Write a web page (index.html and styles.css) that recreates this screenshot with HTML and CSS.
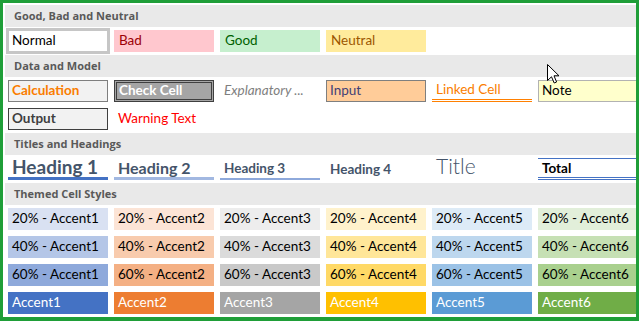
FILE: index.html
```html
<!DOCTYPE html>
<html lang="en">
  <head>
    <meta charset="UTF-8" />
    <title>Cell Styles</title>
    <link rel="stylesheet" href="styles.css">
  </head>
  <body>
    <div class="frame">
      <div class="gallery">
        <div class="band">Good, Bad and Neutral</div>
        <div class="row">
          <div class="cell normal">Normal</div>
          <div class="cell bad">Bad</div>
          <div class="cell good">Good</div>
          <div class="cell neutral">Neutral</div>
        </div>

        <div class="band">Data and Model</div>
        <div class="row">
          <div class="cell calculation">Calculation</div>
          <div class="cell check">Check Cell</div>
          <div class="cell explanatory">Explanatory ...</div>
          <div class="cell input">Input</div>
          <div class="cell linked">Linked Cell</div>
          <div class="cell note">Note</div>
        </div>
        <div class="row">
          <div class="cell output">Output</div>
          <div class="cell warning">Warning Text</div>
        </div>

        <div class="band">Titles and Headings</div>
        <div class="row">
          <div class="cell heading1">Heading 1</div>
          <div class="cell heading2">Heading 2</div>
          <div class="cell heading3">Heading 3</div>
          <div class="cell heading4">Heading 4</div>
          <div class="cell title">Title</div>
          <div class="cell total">Total</div>
        </div>

        <div class="band">Themed Cell Styles</div>
        <div class="row">
          <div class="cell a1-20">20% - Accent1</div>
          <div class="cell a2-20">20% - Accent2</div>
          <div class="cell a3-20">20% - Accent3</div>
          <div class="cell a4-20">20% - Accent4</div>
          <div class="cell a5-20">20% - Accent5</div>
          <div class="cell a6-20">20% - Accent6</div>
        </div>
        <div class="row">
          <div class="cell a1-40">40% - Accent1</div>
          <div class="cell a2-40">40% - Accent2</div>
          <div class="cell a3-40">40% - Accent3</div>
          <div class="cell a4-40">40% - Accent4</div>
          <div class="cell a5-40">40% - Accent5</div>
          <div class="cell a6-40">40% - Accent6</div>
        </div>
        <div class="row">
          <div class="cell a1-60">60% - Accent1</div>
          <div class="cell a2-60">60% - Accent2</div>
          <div class="cell a3-60">60% - Accent3</div>
          <div class="cell a4-60">60% - Accent4</div>
          <div class="cell a5-60">60% - Accent5</div>
          <div class="cell a6-60">60% - Accent6</div>
        </div>
        <div class="row">
          <div class="cell accent a1">Accent1</div>
          <div class="cell accent a2">Accent2</div>
          <div class="cell accent a3">Accent3</div>
          <div class="cell accent a4">Accent4</div>
          <div class="cell accent a5">Accent5</div>
          <div class="cell accent a6">Accent6</div>
        </div>
      </div>
    </div>

    <!-- mouse pointer sitting over the gallery -->
    <svg class="pointer" width="13" height="20" viewBox="0 0 13 20">
      <path d="M0.5 0.5 L0.5 16.5 L4.5 12.8 L7.2 19 L9.6 18 L7 11.8 L12 11.8 Z"
            fill="#fff" stroke="#000" stroke-width="1" stroke-linejoin="miter" />
    </svg>
  </body>
</html>
```

FILE: styles.css
```css
body {
  margin: 0;
  padding: 0;
  background: #fff;
  font-family: Lato, "Liberation Sans", sans-serif;
}
.frame {
  position: relative;
  width: 639px;
  height: 321px;
  box-sizing: border-box;
  border: 3px solid #1f9e38;
  border-bottom-width: 4px;
  overflow: hidden;
  background: #fff;
}
.gallery {
  padding: 2px 0 0 2px;
  width: 700px;
}
.band {
  height: 22px;
  line-height: 21px;
  padding-left: 9px;
  background: #e9e9e9;
  color: #595959;
  font-family: "Open Sans", "Liberation Sans", sans-serif;
  font-weight: 700;
  font-size: 11px;
}
.row {
  display: grid;
  grid-template-columns: repeat(6, 100px);
  column-gap: 6px;
  padding: 3px 3px;
}
.cell {
  height: 22px;
  box-sizing: border-box;
  padding-left: 4px;
  line-height: 20px;
  font-size: 13.5px;
  color: #000;
  white-space: nowrap;
  overflow: hidden;
}

/* good, bad and neutral */
.normal {
  outline: 3px solid #c6c6c6;
  outline-offset: -1px;
  background: #fff;
}
.bad {
  background: #ffc7ce;
  color: #9c0006;
  padding-left: 5px;
}
.good {
  background: #c6efce;
  color: #006100;
  padding-left: 5px;
}
.neutral {
  background: #ffeb9c;
  color: #9c5700;
  padding-left: 5px;
}

/* data and model */
.calculation {
  background: #f2f2f2;
  border: 1px solid #7f7f7f;
  color: #fa7d00;
  font-weight: bold;
  padding-left: 3px;
  line-height: 19px;
}
.check {
  background: #a5a5a5;
  border: 3px double #3f3f3f;
  color: #fff;
  font-weight: bold;
  padding-left: 2px;
  line-height: 15px;
}
.explanatory {
  color: #7f7f7f;
  font-style: italic;
}
.input {
  background: #ffcc99;
  border: 1px solid #7f7f7f;
  color: #3f3f76;
  padding-left: 3px;
  line-height: 19px;
}
.linked {
  color: #fa7d00;
  border-bottom: 3px double #ff8001;
  line-height: 18px;
}
.note {
  background: #ffffcc;
  border: 1px solid #b2b2b2;
  padding-left: 3px;
  line-height: 19px;
}
.output {
  background: #f2f2f2;
  border: 1px solid #3f3f3f;
  color: #3f3f3f;
  font-weight: bold;
  padding-left: 3px;
  line-height: 19px;
}
.warning {
  color: #ff0000;
}

/* titles and headings */
.heading1,
.heading2,
.heading3,
.heading4,
.title {
  color: #44546a;
  font-weight: bold;
  overflow: visible;
}
.heading1 {
  font-size: 19px;
  line-height: 18px;
  border-bottom: 3px solid #4472c4;
}
.heading2 {
  font-size: 16px;
  line-height: 19px;
  border-bottom: 3px solid #a2b8e1;
}
.heading3 {
  font-size: 13.5px;
  line-height: 21px;
  border-bottom: 2px solid #8ea9db;
}
.heading4 {
  font-size: 13.5px;
  line-height: 23px;
}
.title {
  font-weight: 300;
  font-size: 21px;
  line-height: 16px;
}
.total {
  font-weight: bold;
  border-top: 1px solid #4472c4;
  border-bottom: 3px double #4472c4;
  line-height: 18px;
}

/* themed cell styles */
.a1-20 { background: #d9e1f2; }
.a1-40 { background: #b4c6e7; }
.a1-60 { background: #8ea9db; }
.a2-20 { background: #fce4d6; }
.a2-40 { background: #f8cbad; }
.a2-60 { background: #f4b084; }
.a3-20 { background: #ededed; }
.a3-40 { background: #dbdbdb; }
.a3-60 { background: #c9c9c9; }
.a4-20 { background: #fff2cc; }
.a4-40 { background: #ffe699; }
.a4-60 { background: #ffd966; }
.a5-20 { background: #ddebf7; }
.a5-40 { background: #bdd7ee; }
.a5-60 { background: #9bc2e6; }
.a6-20 { background: #e2efda; }
.a6-40 { background: #c6e0b4; }
.a6-60 { background: #a9d08e; }
.accent {
  color: #fff;
}
.a1 { background: #4472c4; }
.a2 { background: #ed7d31; }
.a3 { background: #a5a5a5; }
.a4 { background: #ffc000; }
.a5 { background: #5b9bd5; }
.a6 { background: #70ad47; }

.pointer {
  position: absolute;
  left: 547px;
  top: 64px;
}
```
